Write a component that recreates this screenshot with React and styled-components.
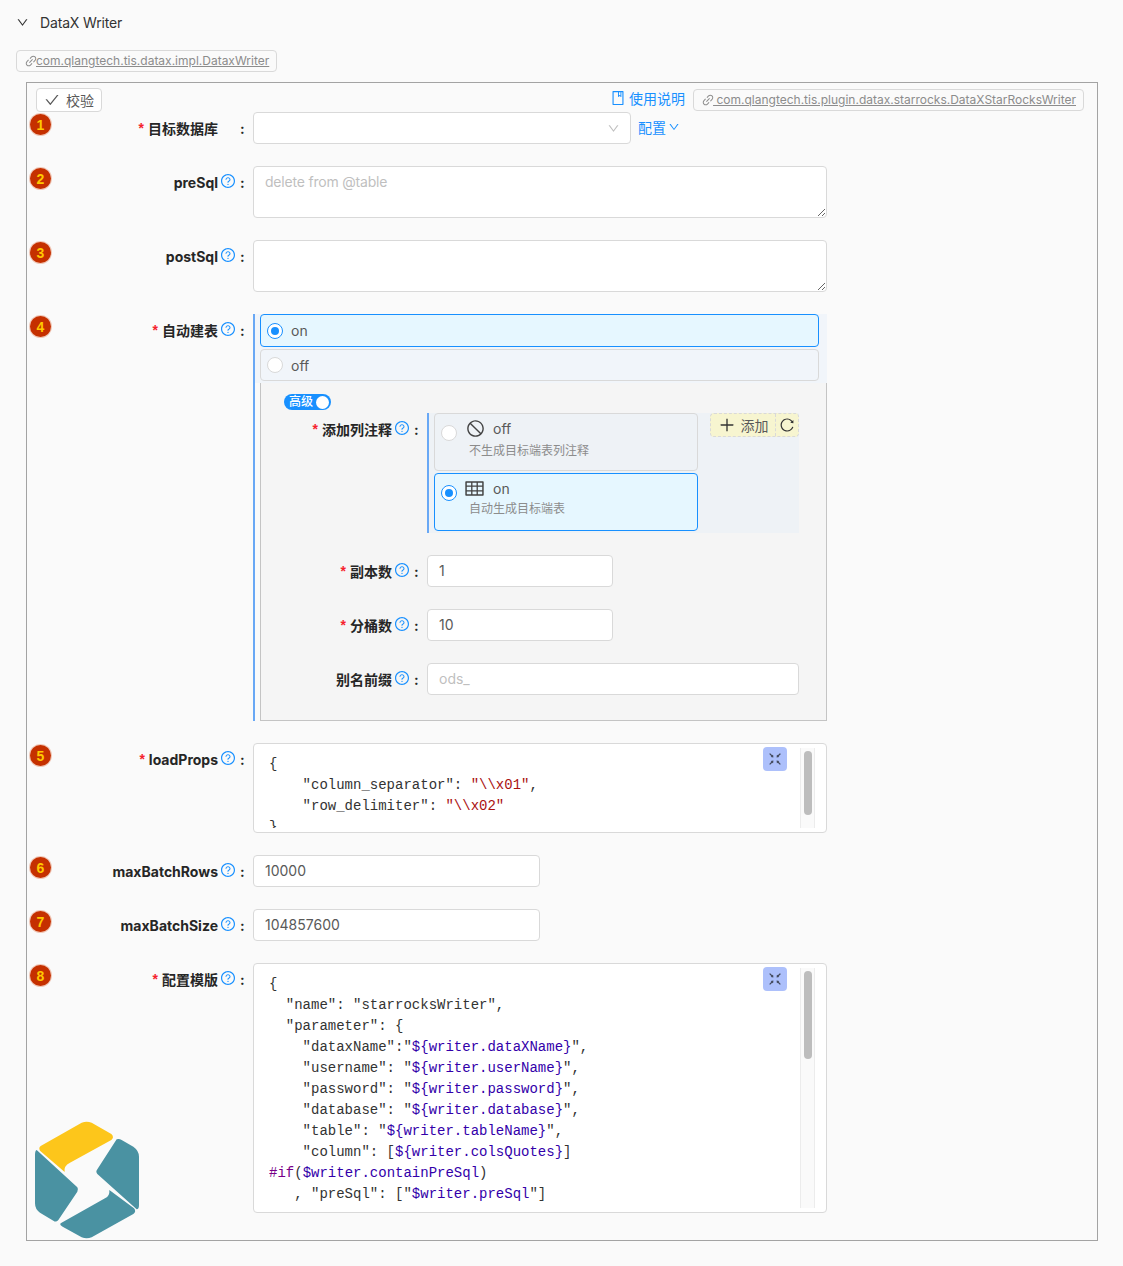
import React from "react";
import styled, { createGlobalStyle } from "styled-components";
import {
  AiOutlineBook,
  AiOutlineCheck,
  AiOutlineDown,
  AiOutlineFullscreenExit,
  AiOutlineLink,
  AiOutlinePlus,
  AiOutlineQuestionCircle,
  AiOutlineReload,
  AiOutlineStop,
  AiOutlineTable,
} from "react-icons/ai";

const GlobalStyle = createGlobalStyle`
  html, body {
    margin: 0;
    background: #fafafa;
  }
  body {
    font-family: Inter, "Noto Sans CJK SC", sans-serif;
    font-size: 14px;
    color: #595959;
  }
  * {
    box-sizing: border-box;
  }
`;

const Page = styled.div`
  position: relative;
  height: 1266px;
  overflow: hidden;
`;

const Header = styled.div`
  display: flex;
  align-items: center;
  height: 45px;
  padding-left: 16px;
  color: #333;
  letter-spacing: -0.15px;
  svg {
    font-size: 13px;
    margin-right: 11px;
  }
`;

const Tag = styled.a`
  display: inline-flex;
  align-items: center;
  height: 22px;
  padding: 0 7px 1px;
  border: 1px solid #d9d9d9;
  border-radius: 4px;
  background: #fafafa;
  font-size: 12px;
  color: #8c8c8c;
  text-decoration: underline;
  white-space: nowrap;
  svg {
    font-size: 14px;
    margin-right: -2px;
    flex: none;
  }
`;

const TagRow = styled.div`
  margin: 5px 0 10px 16px;
  height: 22px;
`;

const Panel = styled.div`
  width: 1072px;
  height: 1159px;
  margin-left: 26px;
  border: 1px solid #a3a3a3;
`;

const TopBar = styled.div`
  display: flex;
  align-items: flex-start;
  justify-content: space-between;
  height: 29px;
  padding: 5px 13px 0 9px;
`;

const CheckButton = styled.button`
  display: inline-flex;
  align-items: center;
  height: 24px;
  width: 66px;
  padding: 0 0 0 7px;
  border: 1px solid #d9d9d9;
  border-radius: 4px;
  background: #fff;
  font: inherit;
  color: #595959;
  svg {
    font-size: 16px;
    margin-right: 6px;
  }
`;

const TopRight = styled.div`
  display: flex;
  align-items: center;
  gap: 8px;
`;

const DocLink = styled.a`
  display: inline-flex;
  align-items: center;
  margin-bottom: 4px;
  color: #1890ff;
  svg {
    font-size: 16px;
    margin: 0 3px 0 -1px;
  }
`;

const Rows = styled.div`
  display: flex;
  flex-direction: column;
  gap: 22px;
`;

const Row = styled.div`
  display: flex;
  align-items: flex-start;
`;

const Badge = styled.div`
  flex: none;
  display: flex;
  align-items: center;
  justify-content: center;
  width: 21px;
  height: 21px;
  margin: 2px 0 0 3px;
  border-radius: 50%;
  background: #c53000;
  box-shadow: 0 0 0 1px #f0c8b8;
  color: #ffc800;
  font-family: "Liberation Sans", sans-serif;
  font-size: 14px;
  font-weight: 700;
`;

const Label = styled.div`
  flex: none;
  display: flex;
  align-items: center;
  justify-content: flex-end;
  width: ${(p) => p.$width}px;
  height: 32px;
  margin-right: 8px;
  font-weight: 700;
  color: #262626;
  white-space: nowrap;
`;

const Star = styled.span`
  margin-right: 4px;
  color: #f5222d;
  font-family: "Liberation Sans", sans-serif;
  font-weight: 700;
`;

const HelpSlot = styled.span`
  display: inline-flex;
  width: 16px;
  margin: -3px 0 0 2px;
  color: #1890ff;
  font-size: 16px;
  font-weight: 400;
`;

const Colon = styled.span`
  margin-left: 4px;
  width: 5px;
`;

const Field = styled.input`
  display: block;
  width: ${(p) => p.$width}px;
  height: 32px;
  padding: 0 11px 2px;
  border: 1px solid #d9d9d9;
  border-radius: 4px;
  background: #fff;
  font: inherit;
  color: #595959;
  outline: none;
  &::placeholder {
    color: #bfbfbf;
  }
`;

const Area = styled.textarea`
  display: block;
  width: 574px;
  height: 52px;
  padding: 4px 11px;
  border: 1px solid #d9d9d9;
  border-radius: 4px;
  background: #fff;
  font: inherit;
  line-height: 22px;
  outline: none;
  &::placeholder {
    color: #bfbfbf;
    letter-spacing: -0.2px;
  }
`;

const SelectRow = styled.div`
  display: flex;
  align-items: flex-start;
`;

const SelectBox = styled.div`
  display: flex;
  align-items: center;
  justify-content: flex-end;
  width: 378px;
  height: 32px;
  padding-right: 10px;
  border: 1px solid #d9d9d9;
  border-radius: 4px;
  background: #fff;
  color: #bfbfbf;
  svg {
    font-size: 13px;
  }
`;

const ConfigLink = styled.a`
  display: inline-flex;
  align-items: center;
  height: 30px;
  margin-left: 7px;
  color: #1890ff;
  svg {
    font-size: 12px;
    margin-left: 2px;
  }
`;

const ChoiceColumn = styled.div`
  width: 574px;
  border-left: 2px solid #69a8f5;
`;

const ChoiceGroup = styled.div`
  display: flex;
  flex-direction: column;
  gap: 2px;
  padding: 0 8px 2px 5px;
  background: #f1f5fa;
`;

const ChoiceBar = styled.div`
  display: flex;
  align-items: center;
  height: ${(p) => (p.$active ? 33 : 32)}px;
  padding-left: 6px;
  border: 1px solid ${(p) => (p.$active ? "#1890ff" : "#d9d9d9")};
  border-radius: 4px;
  background: ${(p) => (p.$active ? "#e6f7ff" : "#f1f5fa")};
`;

const Radio = styled.span`
  flex: none;
  display: inline-flex;
  align-items: center;
  justify-content: center;
  width: 16px;
  height: 16px;
  margin-right: 8px;
  border: 1px solid ${(p) => (p.$active ? "#1890ff" : "#d9d9d9")};
  border-radius: 50%;
  background: #fff;
  &::after {
    content: "";
    display: ${(p) => (p.$active ? "block" : "none")};
    width: 8px;
    height: 8px;
    border-radius: 50%;
    background: #1890ff;
  }
`;

const NestedBox = styled.div`
  margin-left: 5px;
  padding: 11px 27px 25px 23px;
  border: 1px solid #c4c4c4;
  border-top: none;
  background: #f5f5f5;
`;

const Switch = styled.div`
  display: flex;
  align-items: center;
  justify-content: space-between;
  width: 47px;
  height: 16px;
  margin-bottom: 3px;
  padding: 0 2px 0 5px;
  border-radius: 8px;
  background: #1890ff;
  color: #fff;
  font-size: 12px;
  font-weight: 500;
  line-height: 16px;
  &::after {
    content: "";
    width: 13px;
    height: 13px;
    border-radius: 50%;
    background: #fff;
  }
`;

const CardColumn = styled.div`
  display: flex;
  width: 372px;
  height: 120px;
  padding: 0 0 2px 5px;
  border-left: 2px solid #69a8f5;
  background: #eef2f6;
`;

const Cards = styled.div`
  display: flex;
  flex-direction: column;
  gap: 2px;
  width: 264px;
`;

const Card = styled.div`
  display: flex;
  align-items: flex-start;
  height: 58px;
  padding: 11px 0 0 6px;
  border: 1px solid ${(p) => (p.$active ? "#1890ff" : "#d9d9d9")};
  border-radius: 4px;
  background: ${(p) => (p.$active ? "#e6f7ff" : "#eef2f6")};
  ${Radio} {
    margin-right: 12px;
  }
`;

const CardBody = styled.div`
  display: flex;
  flex-direction: column;
  margin-top: -7px;
`;

const CardTitle = styled.div`
  display: flex;
  align-items: center;
  height: 20px;
  margin-left: -3px;
`;

const CardIcon = styled.span`
  display: inline-flex;
  align-items: center;
  width: 27px;
  font-size: ${(p) => p.$size}px;
  color: #434343;
  svg {
    margin-left: ${(p) => p.$shift || 0}px;
  }
`;

const CardDesc = styled.div`
  margin-top: ${(p) => (p.$tight ? 1 : 3)}px;
  font-size: 12px;
  line-height: 20px;
  color: #8c8c8c;
`;

const AddGroup = styled.div`
  display: flex;
  height: 24px;
  margin-left: 12px;
  border: 1px dashed #d9d9d9;
  border-radius: 4px;
  background: #f7f5d0;
`;

const AddButton = styled.div`
  display: flex;
  align-items: center;
  justify-content: center;
  width: ${(p) => (p.$icon ? 23 : 64)}px;
  border-left: ${(p) => (p.$icon ? "1px dashed #d9d9d9" : "none")};
  color: #595959;
  svg {
    font-size: ${(p) => (p.$icon ? 16 : 18)}px;
    color: #333;
  }
`;

const AddText = styled.span`
  margin-left: 5px;
`;

const CodeBox = styled.div`
  position: relative;
  width: 574px;
  height: ${(p) => p.$height}px;
  padding: 10px 0 0 15px;
  border: 1px solid #d9d9d9;
  border-radius: 4px;
  background: #fff;
  overflow: hidden;
`;

const Code = styled.div`
  height: ${(p) => p.$height}px;
  overflow: hidden;
  font-family: "Liberation Mono", monospace;
  font-size: 14px;
  line-height: 21px;
  color: #333;
`;

const CodeLine = styled.div`
  height: 21px;
  white-space: pre;
`;

const Str = styled.span`
  color: #a11;
`;

const Variable = styled.span`
  color: #30a;
`;

const Keyword = styled.span`
  color: #708;
`;

const ExpandButton = styled.div`
  position: absolute;
  top: 3px;
  left: 509px;
  display: flex;
  align-items: center;
  justify-content: center;
  width: 24px;
  height: 24px;
  border-radius: 4px;
  background: #adc0fb;
  color: #434a5c;
  font-size: 16px;
`;

const ScrollTrack = styled.div`
  position: absolute;
  top: 4px;
  left: 546px;
  width: 15px;
  bottom: 4px;
  border-left: 1px solid #ececec;
  border-right: 1px solid #ececec;
  background: #fafafa;
`;

const ScrollThumb = styled.div`
  width: 8px;
  height: ${(p) => p.$height}px;
  margin: 3px 0 0 3px;
  border-radius: 4px;
  background: #bdbdbd;
`;

const Logo = styled.svg`
  position: absolute;
  left: 20px;
  top: 1110px;
  width: 140px;
  height: 140px;
`;

const Help = () => (
  <HelpSlot>
    <AiOutlineQuestionCircle />
  </HelpSlot>
);

const FieldLabel = ({ text, required, help = true, width = 194 }) => (
  <Label $width={width}>
    {required && <Star>*</Star>}
    {text}
    {help ? <Help /> : <HelpSlot />}
    <Colon>:</Colon>
  </Label>
);

const CodeChrome = ({ thumb }) => (
  <>
    <ExpandButton>
      <AiOutlineFullscreenExit />
    </ExpandButton>
    <ScrollTrack>
      <ScrollThumb $height={thumb} />
    </ScrollTrack>
  </>
);

// one line of the template: key, then a ${...} value
const TemplateLine = ({ name, value, tail = '",' }) => (
  <CodeLine>
    {`    "${name}": "`}
    <Variable>{value}</Variable>
    {tail}
  </CodeLine>
);

const App = () => {
  return (
    <Page>
      <GlobalStyle />
      <Header>
        <AiOutlineDown />
        DataX Writer
      </Header>
      <TagRow>
        <Tag>
          <AiOutlineLink />
          com.qlangtech.tis.datax.impl.DataxWriter
        </Tag>
      </TagRow>
      <Panel>
        <TopBar>
          <CheckButton>
            <AiOutlineCheck />
            校验
          </CheckButton>
          <TopRight>
            <DocLink>
              <AiOutlineBook />
              使用说明
            </DocLink>
            <Tag>
              <AiOutlineLink />
              &nbsp;com.qlangtech.tis.plugin.datax.starrocks.DataXStarRocksWriter
            </Tag>
          </TopRight>
        </TopBar>
        <Rows>
          <Row>
            <Badge>1</Badge>
            <FieldLabel text="目标数据库" required help={false} />
            <SelectRow>
              <SelectBox>
                <AiOutlineDown />
              </SelectBox>
              <ConfigLink>
                配置
                <AiOutlineDown />
              </ConfigLink>
            </SelectRow>
          </Row>
          <Row>
            <Badge>2</Badge>
            <FieldLabel text="preSql" />
            <Area placeholder="delete from @table" />
          </Row>
          <Row>
            <Badge>3</Badge>
            <FieldLabel text="postSql" />
            <Area />
          </Row>
          <Row>
            <Badge>4</Badge>
            <FieldLabel text="自动建表" required />
            <ChoiceColumn>
              <ChoiceGroup>
                <ChoiceBar $active>
                  <Radio $active />
                  on
                </ChoiceBar>
                <ChoiceBar>
                  <Radio />
                  off
                </ChoiceBar>
              </ChoiceGroup>
              <NestedBox>
                <Switch>高级</Switch>
                <Rows>
                  <Row>
                    <FieldLabel text="添加列注释" required width={135} />
                    <CardColumn>
                      <Cards>
                        <Card>
                          <Radio />
                          <CardBody>
                            <CardTitle>
                              <CardIcon $size={19}>
                                <AiOutlineStop />
                              </CardIcon>
                              off
                            </CardTitle>
                            <CardDesc>不生成目标端表列注释</CardDesc>
                          </CardBody>
                        </Card>
                        <Card $active>
                          <Radio $active />
                          <CardBody>
                            <CardTitle>
                              <CardIcon $size={21} $shift={-2}>
                                <AiOutlineTable />
                              </CardIcon>
                              on
                            </CardTitle>
                            <CardDesc $tight>自动生成目标端表</CardDesc>
                          </CardBody>
                        </Card>
                      </Cards>
                      <AddGroup>
                        <AddButton>
                          <AiOutlinePlus />
                          <AddText>添加</AddText>
                        </AddButton>
                        <AddButton $icon>
                          <AiOutlineReload />
                        </AddButton>
                      </AddGroup>
                    </CardColumn>
                  </Row>
                  <Row>
                    <FieldLabel text="副本数" required width={135} />
                    <Field $width={186} defaultValue="1" />
                  </Row>
                  <Row>
                    <FieldLabel text="分桶数" required width={135} />
                    <Field $width={186} defaultValue="10" />
                  </Row>
                  <Row>
                    <FieldLabel text="别名前缀" width={135} />
                    <Field $width={372} placeholder="ods_" />
                  </Row>
                </Rows>
              </NestedBox>
            </ChoiceColumn>
          </Row>
          <Row>
            <Badge>5</Badge>
            <FieldLabel text="loadProps" required />
            <CodeBox $height={90}>
              <Code $height={74}>
                <CodeLine>{"{"}</CodeLine>
                <CodeLine>
                  {'    "column_separator": '}
                  <Str>{'"\\\\x01"'}</Str>,
                </CodeLine>
                <CodeLine>
                  {'    "row_delimiter": '}
                  <Str>{'"\\\\x02"'}</Str>
                </CodeLine>
                <CodeLine>{"}"}</CodeLine>
              </Code>
              <CodeChrome thumb={64} />
            </CodeBox>
          </Row>
          <Row>
            <Badge>6</Badge>
            <FieldLabel text="maxBatchRows" />
            <Field $width={287} defaultValue="10000" />
          </Row>
          <Row>
            <Badge>7</Badge>
            <FieldLabel text="maxBatchSize" />
            <Field $width={287} defaultValue="104857600" />
          </Row>
          <Row>
            <Badge>8</Badge>
            <FieldLabel text="配置模版" required />
            <CodeBox $height={250}>
              <Code $height={234}>
                <CodeLine>{"{"}</CodeLine>
                <CodeLine>{'  "name": "starrocksWriter",'}</CodeLine>
                <CodeLine>{'  "parameter": {'}</CodeLine>
                <CodeLine>
                  {'    "dataxName":"'}
                  <Variable>{"${writer.dataXName}"}</Variable>
                  {'",'}
                </CodeLine>
                <TemplateLine name="username" value="${writer.userName}" />
                <TemplateLine name="password" value="${writer.password}" />
                <TemplateLine name="database" value="${writer.database}" />
                <TemplateLine name="table" value="${writer.tableName}" />
                <CodeLine>
                  {'    "column": ['}
                  <Variable>{"${writer.colsQuotes}"}</Variable>]
                </CodeLine>
                <CodeLine>
                  <Keyword>#if</Keyword>(
                  <Variable>$writer.containPreSql</Variable>)
                </CodeLine>
                <CodeLine>
                  {'   , "preSql": ["'}
                  <Variable>$writer.preSql</Variable>
                  {'"]'}
                </CodeLine>
              </Code>
              <CodeChrome thumb={88} />
            </CodeBox>
          </Row>
        </Rows>
      </Panel>
      <Logo viewBox="0 0 420 420">
        <path
          fill="#fdc61b"
          d="M62 108 L185 38 Q200 32 215 38 L274 72 Q284 82 274 90 L150 158 Q130 168 134 186 L60 122 Q55 113 62 108 Z"
        />
        <path
          fill="#4a92a2"
          d="M50 120 L172 232 Q176 238 172 245 L115 330 Q108 338 100 332 L60 308 Q45 298 45 280 L45 135 Q45 122 50 120 Z"
        />
        <path
          fill="#4a92a2"
          d="M290 88 Q297 85 305 90 L340 110 Q357 122 357 140 L357 285 Q357 298 350 298 L232 192 Q226 185 232 178 Z"
        />
        <path
          fill="#4a92a2"
          d="M122 340 L255 265 Q270 258 268 240 L342 295 Q350 305 340 312 L215 382 Q200 388 185 382 L128 350 Q118 345 122 340 Z"
        />
      </Logo>
    </Page>
  );
};

export default App;
